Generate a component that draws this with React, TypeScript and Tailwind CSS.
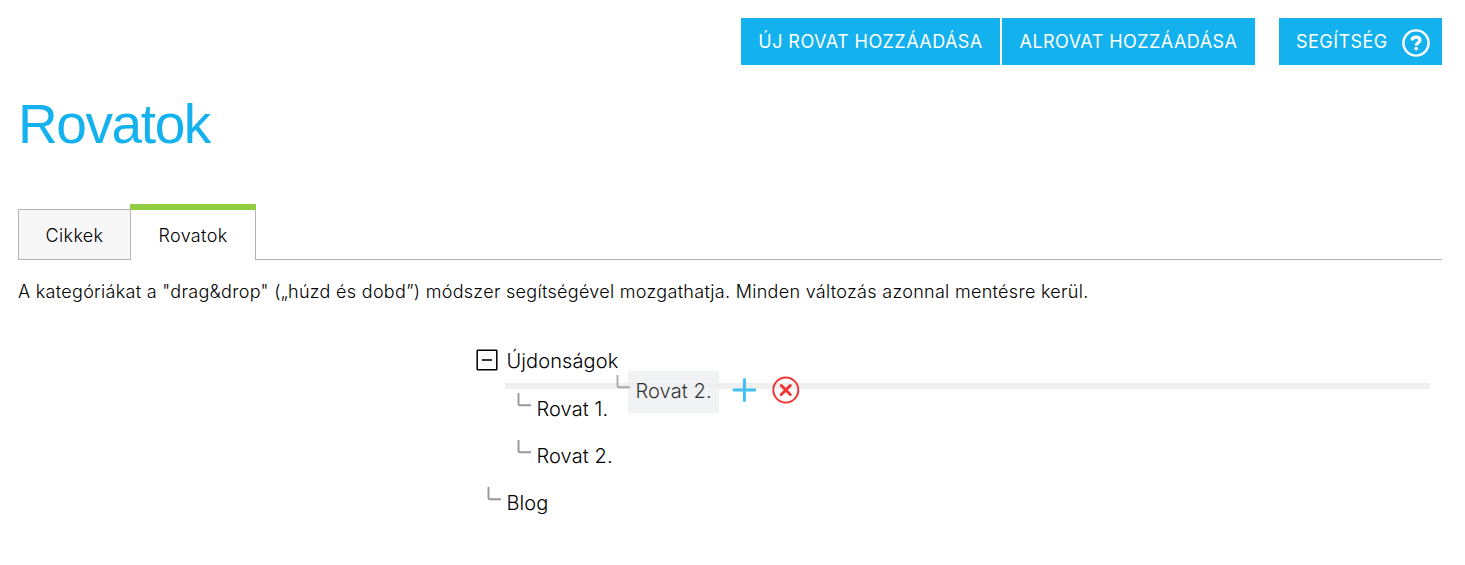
import React from 'react';

interface TreeItemProps {
  label: string;
  expanded?: boolean;
  className?: string;
}

const Elbow = () => (
  <svg className="relative z-10 h-[14px] w-[14px] shrink-0" viewBox="0 0 14 14" fill="none" stroke="#98989c" strokeWidth="1.9">
    <path d="M1.5 0v10.8a1.4 1.4 0 0 0 1.4 1.4H14" />
  </svg>
);

const TreeItem: React.FC<TreeItemProps> = ({ label, expanded, className = '' }) => (
  <div className={`flex h-[41px] ${className}`}>
    <div className="w-[31px] shrink-0">
      {expanded ? (
        <button className="mt-2 block">
          <svg className="h-[22px] w-[22px]" viewBox="0 0 22 22" fill="none" stroke="#000">
            <rect x="1.2" y="1.2" width="19.6" height="19.6" rx="0.6" strokeWidth="1.5" />
            <path d="M6 11h10" stroke="#333" strokeWidth="2" />
          </svg>
        </button>
      ) : (
        <div className="pt-1 pl-[11px]">
          <Elbow />
        </div>
      )}
    </div>
    <span className="-ml-[0.5px] text-[20px] leading-[41px] tracking-[0.1px] whitespace-nowrap">{label}</span>
  </div>
);

const DraggedItem = () => (
  <div className="absolute top-[371px] left-[616px] flex h-[42px] opacity-80">
    <div className="w-3 pt-1">
      <Elbow />
    </div>
    <span className="w-[91px] bg-[#eeeff2] pl-[7.5px] text-[20px] leading-[41px] tracking-[0.1px] whitespace-nowrap">Rovat 2.</span>
    <svg className="mt-[7px] ml-[13px] h-6 w-6" viewBox="0 0 24 24" stroke="#14b1ef" strokeWidth="3" strokeLinecap="round">
      <path d="M12.4 1.5v21M1.9 12h21" />
    </svg>
    <svg className="mt-[5px] ml-4 h-7 w-7" viewBox="0 0 28 28" fill="none" stroke="#f00505" strokeLinecap="round">
      <circle cx="13.8" cy="14" r="12.5" strokeWidth="2" />
      <path d="M9.3 9.5l9 9M18.3 9.5l-9 9" strokeWidth="3" />
    </svg>
  </div>
);

const App = () => {
  return (
    <div className="relative h-[565px] w-[1465px] bg-white pt-[18px] pr-[23px] pl-[18px] font-['Inter',sans-serif] font-light text-black">
      <header className="flex h-[47px] justify-end text-[18px] leading-[47px] font-normal tracking-[0.45px] whitespace-nowrap text-white">
        <button className="w-[259px] bg-[#14b1ef]">ÚJ ROVAT HOZZÁADÁSA</button>
        <button className="ml-[2px] w-[253px] bg-[#14b1ef]">ALROVAT HOZZÁADÁSA</button>
        <button className="ml-6 flex w-[163px] items-center bg-[#14b1ef] pl-[17px]">
          SEGÍTSÉG
          <svg className="mt-[3px] ml-[14px] h-7 w-7" viewBox="0 0 28 28" fill="none" stroke="currentColor">
            <circle cx="14" cy="14" r="12.6" strokeWidth="2.4" />
            <path d="M10 11.4c.2-2.1 1.8-3.2 4-3.2 2.4 0 4 1.2 4 3.1 0 2.6-3.8 2.6-3.8 5.2" strokeWidth="3.2" />
            <circle cx="14.2" cy="19.6" r="1.8" fill="currentColor" stroke="none" />
          </svg>
        </button>
      </header>

      <h1 className="mt-[29px] h-[60px] font-['Liberation_Sans',sans-serif] text-[55px] leading-[61px] font-normal tracking-[-1.4px] text-[#14b1ef]">
        Rovatok
      </h1>

      {/* Tabs */}
      <nav className="mt-[50px] flex h-14 items-end text-[18px] tracking-[0.35px]">
        <button className="h-[51px] w-[112px] border border-r-0 border-[#b3b3b3] bg-[#f7f7f7] pt-[2px]">Cikkek</button>
        <div className="h-14 w-[126px]">
          <div className="h-[6px] bg-[#91cb41]" />
          <button className="h-[50px] w-full border-x border-[#b3b3b3]">Rovatok</button>
        </div>
        <div className="h-px flex-1 bg-[#b3b3b3]" />
      </nav>

      <p className="mt-[18px] h-7 text-[18px] leading-7 tracking-[0.295px] whitespace-nowrap">
        A kategóriákat a "drag&amp;drop" („húzd és dobd”) módszer segítségével mozgathatja. Minden változás azonnal mentésre kerül.
      </p>

      {/* Category tree */}
      <div className="mt-[35px] ml-[458px]">
        <TreeItem label="Újdonságok" expanded />
        <div className="mt-px mr-3 ml-[29px] h-[6px] bg-[#efefef]" />
        <div className="ml-[30px]">
          <TreeItem label="Rovat 1." />
          <TreeItem label="Rovat 2." className="mt-[6px]" />
        </div>
        <TreeItem label="Blog" className="mt-[6px]" />
      </div>

      <DraggedItem />
    </div>
  );
};

export default App;
